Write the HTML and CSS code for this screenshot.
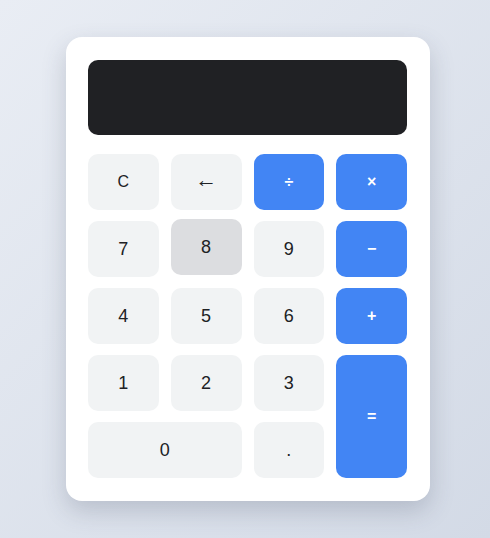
FILE: index.html
```html
<!DOCTYPE html>
<html>
<head>
<meta charset="utf-8">
<link rel="stylesheet" href="styles.css">
</head>
<body>
<div class="calc">
  <div class="display"></div>
  <div class="keys">
    <button class="key small">C</button>
    <button class="key arrow">←</button>
    <button class="key op">÷</button>
    <button class="key op">×</button>
    <button class="key">7</button>
    <button class="key hover">8</button>
    <button class="key">9</button>
    <button class="key op">−</button>
    <button class="key">4</button>
    <button class="key">5</button>
    <button class="key">6</button>
    <button class="key op">+</button>
    <button class="key">1</button>
    <button class="key">2</button>
    <button class="key">3</button>
    <button class="key op equals">=</button>
    <button class="key zero">0</button>
    <button class="key">.</button>
  </div>
</div>
</body>
</html>
```
FILE: styles.css
```css
html, body { margin: 0; height: 100%; }
body {
  background: linear-gradient(135deg, #e9edf4 0%, #d3dae6 100%);
  display: flex;
  align-items: center;
  justify-content: center;
  padding-left: 5px;
  box-sizing: border-box;
  font-family: "Liberation Sans", Arial, sans-serif;
}
.calc {
  width: 364px;
  box-sizing: border-box;
  background: #fff;
  border-radius: 16px;
  padding: 23px 22.5px;
  box-shadow: 0 10px 24px rgba(60, 70, 90, 0.22);
}
.display {
  height: 75px;
  background: #202124;
  border-radius: 10px;
  margin-bottom: 19px;
}
.keys {
  display: grid;
  grid-template-columns: repeat(4, 1fr);
  grid-auto-rows: 56px;
  column-gap: 12px;
  row-gap: 11px;
}
.key {
  border: none;
  border-radius: 10px;
  background: #f1f3f4;
  color: #202124;
  font-family: "Liberation Sans", Arial, sans-serif;
  font-size: 18px;
  padding: 0;
  display: flex;
  align-items: center;
  justify-content: center;
}
.key.small { font-size: 16px; }
.key.arrow { font-size: 22px; line-height: 1; padding-bottom: 4px; }
.key.hover { background: #dcdde0; transform: translateY(-2px); }
.key.op {
  background: #4285f4;
  color: #fff;
  font-weight: bold;
  font-size: 16px;
}
.key.equals { grid-row: span 2; }
.key.zero { grid-column: span 2; }
```
